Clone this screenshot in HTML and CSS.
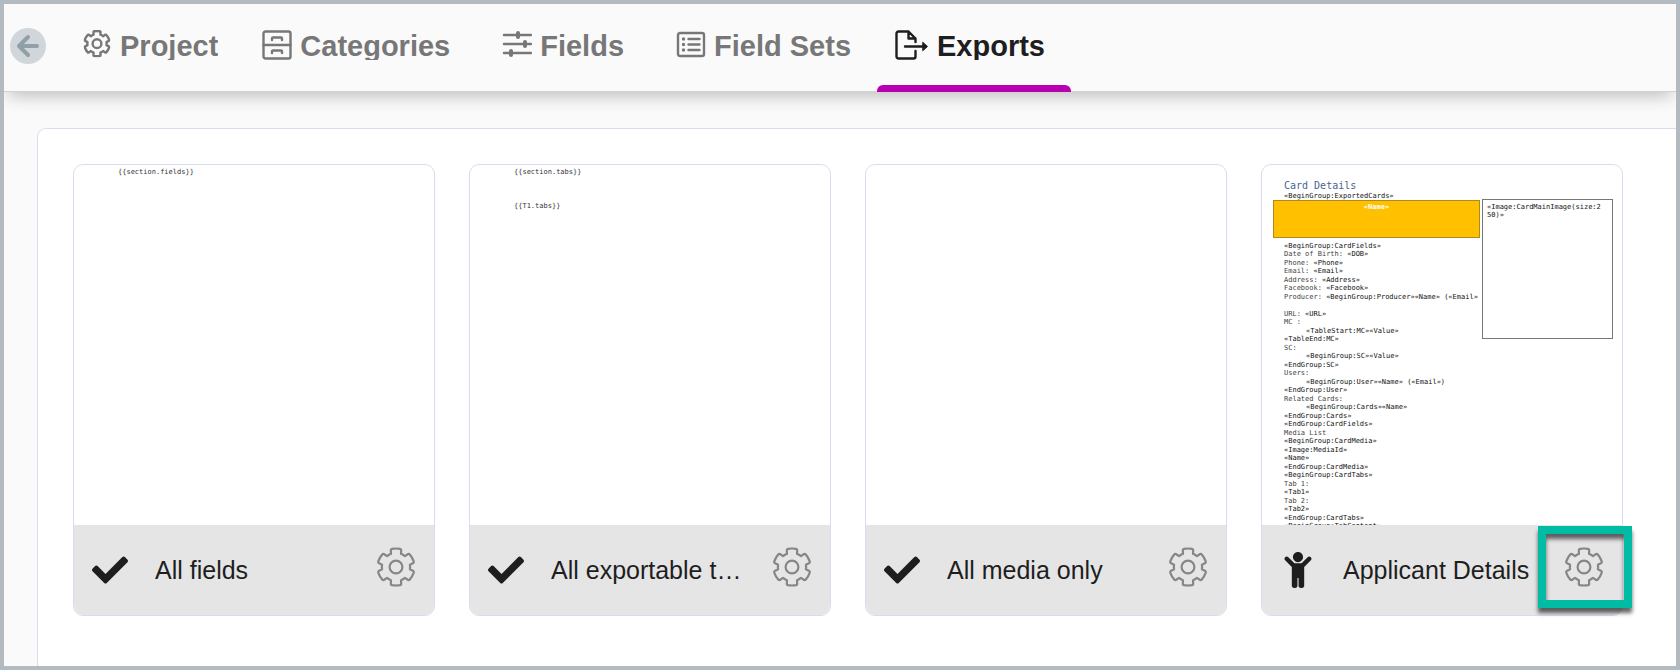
FILE: index.html
```html
<!DOCTYPE html>
<html lang="en">
<head>
<meta charset="utf-8">
<meta name="viewport" content="width=device-width, initial-scale=1">
<title>Exports</title>
<link rel="stylesheet" href="styles.css">
</head>
<body>
<svg class="sprite" aria-hidden="true">
  <symbol id="gear" viewBox="-20 -20 40 40">
    <path d="M-5 -13.2L-5.2 -17Q-5 -18 -4 -18.2Q0 -18.8 4 -18.2Q5 -18 5.2 -17L5 -13.2Q7 -12.4 8.93 -10.93L12.12 -13Q13.2 -13.3 13.76 -12.56Q16.4 -9.5 17.76 -5.64Q18 -4.7 17.32 -4L13.93 -2.27Q14.3 0 13.93 2.27L17.32 4Q18 4.7 17.76 5.64Q16.4 9.5 13.76 12.56Q13.2 13.3 12.12 13L8.93 10.93Q7 12.4 5 13.2L5.2 17Q5 18 4 18.2Q0 18.8 -4 18.2Q-5 18 -5.2 17L-5 13.2Q-7 12.4 -8.93 10.93L-12.12 13Q-13.2 13.3 -13.76 12.56Q-16.4 9.5 -17.76 5.64Q-18 4.7 -17.32 4L-13.93 2.27Q-14.3 0 -13.93 -2.27L-17.32 -4Q-18 -4.7 -17.76 -5.64Q-16.4 -9.5 -13.76 -12.56Q-13.2 -13.3 -12.12 -13L-8.93 -10.93Q-7 -12.4 -5 -13.2Z"/>
    <circle r="6.4"/>
  </symbol>
  <symbol id="check" viewBox="0 0 512 512">
    <path d="M173.898 439.404l-166.4-166.4c-9.997-9.997-9.997-26.206 0-36.204l36.203-36.204c9.997-9.998 26.207-9.998 36.204 0L192 312.69 432.095 72.596c9.997-9.997 26.207-9.997 36.204 0l36.203 36.204c9.997 9.997 9.997 26.206 0 36.204l-294.4 294.401c-9.998 9.997-26.207 9.997-36.204-.001z"/>
  </symbol>
</svg>
<div class="app">
  <header class="topbar">
    <button class="back" type="button" aria-label="Back">
      <svg viewBox="0 0 36 36" aria-hidden="true"><path d="M27 18H9M18 9l-9 9 9 9"/></svg>
    </button>
    <nav class="tabs">
      <a class="tab" href="#project">
        <svg class="tab-icon tab-icon-gear" viewBox="-22 -20 44 44" aria-hidden="true"><use href="#gear" x="-20" y="-20" width="40" height="40"/></svg>
        <span class="tab-label">Project</span>
      </a>
      <a class="tab" href="#categories">
        <svg class="tab-icon" viewBox="0 0 30 30" aria-hidden="true"><rect x="1.500" y="1.500" width="27" height="27" rx="2"/><path d="M1.500 15h27M10 10V8.500q0-1 1-1h8q1 0 1 1V10M10 23v-1.500q0-1 1-1h8q1 0 1 1V23"/></svg>
        <span class="tab-label">Categories</span>
      </a>
      <a class="tab tab-spaced" href="#fields">
        <svg class="tab-icon" viewBox="0 0 30 30" aria-hidden="true"><path d="M2 5h27M2 14h27M2 23h27"/><path class="knob" d="M16 3v4M23 12v4M9 21v4"/></svg>
        <span class="tab-label">Fields</span>
      </a>
      <a class="tab tab-spaced" href="#field-sets">
        <svg class="tab-icon" viewBox="0 0 30 30" aria-hidden="true"><rect x="2" y="3" width="26" height="23" rx="2"/><path d="M12.500 9h11M12.500 14.500h11M12.500 20h11"/><path class="dots" d="M7.500 9h.01M7.500 14.500h.01M7.500 20h.01"/></svg>
        <span class="tab-label">Field Sets</span>
      </a>
      <a class="tab tab-active" href="#exports" aria-current="page">
        <svg class="tab-icon tab-icon-export" viewBox="0 0 34 30" aria-hidden="true"><path d="M20.500 21v5.500a2 2 0 0 1-2 2H3.500a2 2 0 0 1-2-2V3.500a2 2 0 0 1 2-2h10l7 7V12M13.500 1.500v7h7M10 16.500h20"/><path class="solid" d="M28 12.500l4.500 4-4.500 4z"/></svg>
        <span class="tab-label">Exports</span>
      </a>
    </nav>
  </header>
  <main class="panel">
    <article class="card">
      <div class="preview"><div class="note">{{section.fields}}</div></div>
      <footer class="card-foot">
        <svg class="mark" aria-hidden="true"><use href="#check"/></svg>
        <h2 class="card-title">All fields</h2>
        <button class="settings" type="button" aria-label="All fields settings"><svg aria-hidden="true"><use href="#gear"/></svg></button>
      </footer>
    </article>
    <article class="card">
      <div class="preview"><div class="note">{{section.tabs}}</div><div class="note">{{T1.tabs}}</div></div>
      <footer class="card-foot">
        <svg class="mark" aria-hidden="true"><use href="#check"/></svg>
        <h2 class="card-title">All exportable tabs</h2>
        <button class="settings" type="button" aria-label="All exportable tabs settings"><svg aria-hidden="true"><use href="#gear"/></svg></button>
      </footer>
    </article>
    <article class="card">
      <div class="preview"></div>
      <footer class="card-foot">
        <svg class="mark" aria-hidden="true"><use href="#check"/></svg>
        <h2 class="card-title">All media only</h2>
        <button class="settings" type="button" aria-label="All media only settings"><svg aria-hidden="true"><use href="#gear"/></svg></button>
      </footer>
    </article>
    <article class="card">
      <div class="preview">
        <div class="doc">
          <div class="doc-heading">Card Details</div>
          <div class="doc-lead">«BeginGroup:ExportedCards»</div>
          <div class="doc-banner">«Name»</div>
          <div class="doc-image">«Image:CardMainImage(size:250)»</div>
          <div class="doc-lines">
            <div>«BeginGroup:CardFields»</div>
            <div><i>Date of Birth:</i> «DOB»</div>
            <div><i>Phone:</i> «Phone»</div>
            <div><i>Email:</i> «Email»</div>
            <div><i>Address:</i> «Address»</div>
            <div><i>Facebook:</i> «Facebook»</div>
            <div><i>Producer:</i> «BeginGroup:Producer»«Name» («Email»</div>
            <div>&nbsp;</div>
            <div><i>URL:</i> «URL»</div>
            <div><i>MC :</i></div>
            <div class="indent">«TableStart:MC»«Value»</div>
            <div>«TableEnd:MC»</div>
            <div><i>SC:</i></div>
            <div class="indent">«BeginGroup:SC»«Value»</div>
            <div>«EndGroup:SC»</div>
            <div><i>Users:</i></div>
            <div class="indent">«BeginGroup:User»«Name» («Email»)</div>
            <div>«EndGroup:User»</div>
            <div><i>Related Cards:</i></div>
            <div class="indent">«BeginGroup:Cards»«Name»</div>
            <div>«EndGroup:Cards»</div>
            <div>«EndGroup:CardFields»</div>
            <div><i>Media List</i></div>
            <div>«BeginGroup:CardMedia»</div>
            <div>«Image:MediaId»</div>
            <div>«Name»</div>
            <div>«EndGroup:CardMedia»</div>
            <div>«BeginGroup:CardTabs»</div>
            <div><i>Tab 1:</i></div>
            <div>«Tab1»</div>
            <div><i>Tab 2:</i></div>
            <div>«Tab2»</div>
            <div>«EndGroup:CardTabs»</div>
            <div>«BeginGroup:TabContent»</div>
          </div>
        </div>
      </div>
      <footer class="card-foot">
        <svg class="mark" viewBox="0 0 384 512" aria-hidden="true"><path d="M120 72c0-39.765 32.235-72 72-72s72 32.235 72 72c0 39.764-32.235 72-72 72s-72-32.236-72-72zm254.627 1.373c-12.496-12.497-32.758-12.497-45.254 0L242.745 160H141.254L54.627 73.373c-12.496-12.497-32.758-12.497-45.254 0-12.497 12.497-12.497 32.758 0 45.255L104 213.254V480c0 17.673 14.327 32 32 32h16c17.673 0 32-14.327 32-32V368h16v112c0 17.673 14.327 32 32 32h16c17.673 0 32-14.327 32-32V213.254l94.627-94.627c12.497-12.496 12.497-32.757 0-45.254z"/></svg>
        <h2 class="card-title">Applicant Details</h2>
        <button class="settings" type="button" aria-label="Applicant Details settings"><svg aria-hidden="true"><use href="#gear"/></svg></button>
        <span class="highlight" aria-hidden="true"></span>
      </footer>
    </article>
  </main>
</div>
</body>
</html>
```
FILE: styles.css
```css
* {
  box-sizing: border-box;
}

body {
  margin: 0;
  font-family: "Liberation Sans", Arial, sans-serif;
  color: #1e1e1e;
}

.sprite {
  position: absolute;
  width: 0;
  height: 0;
}

.app {
  display: flex;
  flex-direction: column;
  min-height: 100vh;
  border: 4px solid #b3bbc1;
  background: #fafafa;
}

button {
  padding: 0;
  border: 0;
  background: none;
  cursor: pointer;
}

/* Top bar */
.topbar {
  display: flex;
  padding-left: 6px;
  background: #fafafa;
  border-bottom: 1px solid #d2d2d2;
  box-shadow: 0 8px 16px -4px rgba(0, 0, 0, 0.24);
  clip-path: inset(0 0 -32px 0);
}

.back {
  width: 36px;
  height: 36px;
  margin: 24px 18px 0 0;
  border-radius: 50%;
  background: #d0d6da;
}

.back svg {
  display: block;
  fill: none;
  stroke: #90a0a8;
  stroke-width: 4;
  stroke-linecap: round;
  stroke-linejoin: round;
}

.tabs {
  display: flex;
  height: 87px;
}

.tab {
  position: relative;
  display: flex;
  align-items: flex-start;
  gap: 8px;
  padding: 24px 26px 0 18px;
  color: #777;
  text-decoration: none;
}

.tab-spaced {
  padding-left: 26px;
}

.tab-icon {
  width: 30px;
  height: 30px;
  margin-top: 2px;
  fill: none;
  stroke: currentColor;
  stroke-width: 2.4;
  stroke-linecap: round;
  stroke-linejoin: round;
}

.tab-icon-gear {
  stroke-width: 3.5;
}

.tab-icon-export {
  width: 34px;
}

.knob {
  stroke-width: 4;
}

.dots {
  stroke-width: 3.4;
}

.solid {
  fill: currentColor;
  stroke-width: 1;
}

.tab-label {
  height: 32px;
  overflow: hidden;
  font-size: 29px;
  font-weight: 700;
  line-height: 36px;
  white-space: nowrap;
}

.tab-active {
  color: #1e1e1e;
}

.tab-active::after {
  content: "";
  position: absolute;
  right: 0;
  bottom: -1px;
  left: 0;
  height: 7px;
  border-radius: 6px 6px 0 0;
  background: #b800b0;
}

/* Card grid */
.panel {
  flex: 1;
  display: grid;
  grid-template-columns: repeat(4, minmax(0, 1fr));
  align-items: start;
  gap: 34px;
  margin: 36px 0 0 33px;
  padding: 35px 53px 50px 35px;
  border: 1px solid #d9dcee;
  border-width: 1px 0 0 1px;
  border-radius: 9px 0 0 0;
  background: #fff;
}

.card {
  border: 1px solid #d9dcee;
  border-radius: 10px;
  background: #fff;
}

.preview {
  aspect-ratio: 1;
  overflow: hidden;
  border-radius: 9px 9px 0 0;
  font-family: "DejaVu Sans Mono", monospace;
  font-size: 7px;
  color: #111;
}

.note {
  height: 34px;
  padding: 3px 0 0 44px;
  line-height: 9px;
  color: #333;
}

.card-foot {
  position: relative;
  display: flex;
  align-items: center;
  height: 90px;
  padding: 0 18px;
  border-radius: 0 0 9px 9px;
  background: #e5e5e5;
}

.mark {
  flex: none;
  width: 36px;
  height: 36px;
  fill: #1e1e1e;
}

.card-title {
  flex: 1;
  min-width: 0;
  margin: 0 22px 0 27px;
  overflow: hidden;
  font-size: 25px;
  font-weight: 400;
  line-height: 32px;
  white-space: nowrap;
  text-overflow: ellipsis;
}

.settings {
  flex: none;
  width: 40px;
  height: 40px;
  margin-bottom: 6px;
}

.settings svg {
  display: block;
  width: 40px;
  height: 40px;
  fill: none;
  stroke: #868686;
  stroke-width: 2.2;
  stroke-linejoin: round;
}

.highlight {
  position: absolute;
  top: 1px;
  right: -10px;
  width: 94px;
  height: 82px;
  border: 8px solid #00bca4;
  box-shadow: 0 5px 4px rgba(0, 0, 0, 0.6), inset 0 5px 4px rgba(0, 0, 0, 0.6);
  pointer-events: none;
}

/* Document thumbnail */
.doc {
  position: relative;
  padding: 15px 0 0 22px;
  white-space: nowrap;
}

.doc i {
  font-style: normal;
  color: #444;
}

.doc-heading {
  font-size: 10px;
  line-height: 12px;
  color: #4a6496;
}

.doc-lead {
  line-height: 8px;
}

.doc-banner {
  width: 207px;
  height: 38px;
  margin-left: -11px;
  padding-top: 2px;
  border: 1px solid #b08a1c;
  background: #ffc000;
  color: #fff;
  font-weight: 700;
  line-height: 9px;
  text-align: center;
}

.doc-image {
  position: absolute;
  top: 34px;
  left: 220px;
  width: 131px;
  height: 140px;
  padding: 3px 8px 3px 4px;
  border: 1px solid #777;
  background: #fff;
  line-height: 8px;
  white-space: normal;
  word-break: break-all;
}

.doc-lines {
  padding-top: 4px;
}

.doc-lines div {
  height: 8px;
  line-height: 8px;
}

.doc-lines div:nth-child(even) {
  height: 9px;
  line-height: 9px;
}

.doc-lines .indent {
  padding-left: 22px;
}
```
